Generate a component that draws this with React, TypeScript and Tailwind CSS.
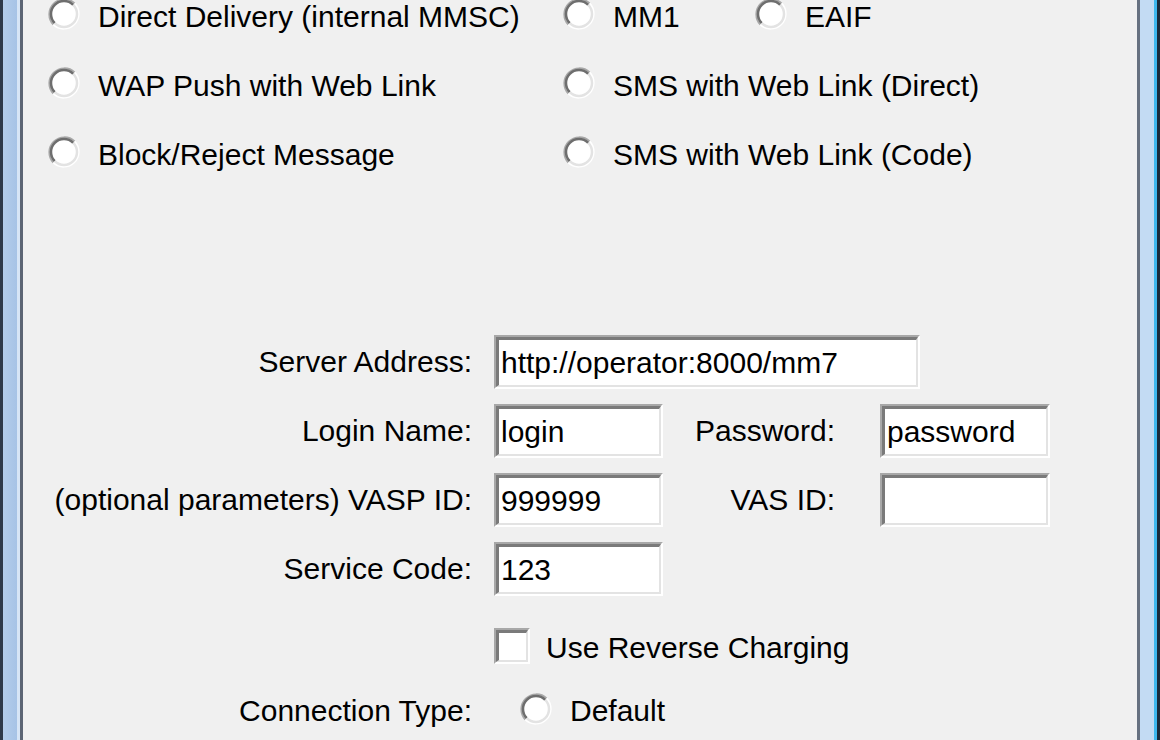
import React from 'react';

const Radio = () => (
  <svg width="32" height="32" viewBox="0 0 32 32" className="shrink-0">
    <circle cx="16" cy="16" r="13" fill="#ffffff" />
    <path d="M 5.4 26.6 A 15 15 0 0 1 26.6 5.4" fill="none" stroke="#a8a8a8" strokeWidth="2" />
    <path d="M 6.8 25.2 A 13 13 0 0 1 25.2 6.8" fill="none" stroke="#6e6e6e" strokeWidth="2.5" />
    <path d="M 26.6 5.4 A 15 15 0 0 1 5.4 26.6" fill="none" stroke="#ffffff" strokeWidth="2" />
    <path d="M 25.2 6.8 A 13 13 0 0 1 6.8 25.2" fill="none" stroke="#e3e3e3" strokeWidth="2.5" />
  </svg>
);

const RadioOption = ({ label, width }: { label: string; width: string }) => (
  <div className={`flex items-center gap-[18px] ${width}`}>
    <div className="mb-[6px]">
      <Radio />
    </div>
    <span className="whitespace-nowrap">{label}</span>
  </div>
);

const Field = ({ value, width }: { value: string; width: string }) => (
  <div className={`h-[54px] border-t-2 border-l-2 border-b-2 border-r-2 border-t-[#a8a8a8] border-l-[#a8a8a8] border-b-white border-r-white ${width}`}>
    <div className="h-full bg-white border-t-[3px] border-l-[3px] border-b-2 border-r-2 border-t-[#7a7a7a] border-l-[#7a7a7a] border-b-[#e3e3e3] border-r-[#e3e3e3] flex items-center pl-[2px] overflow-hidden">
      <span className="whitespace-nowrap">{value}</span>
    </div>
  </div>
);

const Label = ({ text, width }: { text: string; width: string }) => (
  <div className={`text-right whitespace-nowrap shrink-0 ${width}`}>{text}</div>
);

export default function App() {
  return (
    <div
      className="w-[1160px] h-[740px] flex overflow-hidden text-black text-[30px] leading-none"
      style={{ fontFamily: '"Liberation Sans", Arial, sans-serif' }}
    >
      {/* left frame */}
      <div className="w-[3px] bg-[#2e3a4a]" />
      <div className="w-[14px] bg-gradient-to-r from-[#b3cdeb] to-[#a6c3e6]" />
      <div className="w-[3px] bg-[#d6e5f6]" />
      <div className="w-[3px] bg-[#5c6574]" />

      {/* client area */}
      <div className="flex-1 bg-[#f0f0f0] flex flex-col">
        <div className="-mt-[18px] flex flex-col">
          <div className="h-[69px] flex items-center pl-[25px]">
            <RadioOption label="Direct Delivery (internal MMSC)" width="w-[515px]" />
            <RadioOption label="MM1" width="w-[192px]" />
            <RadioOption label="EAIF" width="w-[200px]" />
          </div>
          <div className="h-[69px] flex items-center pl-[25px]">
            <RadioOption label="WAP Push with Web Link" width="w-[515px]" />
            <RadioOption label="SMS with Web Link (Direct)" width="w-[420px]" />
          </div>
          <div className="h-[69px] flex items-center pl-[25px]">
            <RadioOption label="Block/Reject Message" width="w-[515px]" />
            <RadioOption label="SMS with Web Link (Code)" width="w-[420px]" />
          </div>
        </div>

        <div className="mt-[146px] flex flex-col gap-[15px]">
          <div className="flex items-center">
            <Label text="Server Address:" width="w-[449px]" />
            <div className="ml-[22px]">
              <Field value="http://operator:8000/mm7" width="w-[426px]" />
            </div>
          </div>
          <div className="flex items-center">
            <Label text="Login Name:" width="w-[449px]" />
            <div className="ml-[22px]">
              <Field value="login" width="w-[169px]" />
            </div>
            <Label text="Password:" width="w-[172px]" />
            <div className="ml-[45px]">
              <Field value="password" width="w-[170px]" />
            </div>
          </div>
          <div className="flex items-center">
            <Label text="(optional parameters) VASP ID:" width="w-[449px]" />
            <div className="ml-[22px]">
              <Field value="999999" width="w-[169px]" />
            </div>
            <Label text="VAS ID:" width="w-[172px]" />
            <div className="ml-[45px]">
              <Field value="" width="w-[170px]" />
            </div>
          </div>
          <div className="flex items-center">
            <Label text="Service Code:" width="w-[449px]" />
            <div className="ml-[22px]">
              <Field value="123" width="w-[169px]" />
            </div>
          </div>
        </div>

        <div className="mt-[32px] h-[36px] flex items-center pl-[471px] gap-[16px]">
          <div className="w-[36px] h-[36px] border-t-2 border-l-2 border-b-2 border-r-2 border-t-[#a8a8a8] border-l-[#a8a8a8] border-b-white border-r-white">
            <div className="w-full h-full bg-white border-t-[3px] border-l-[3px] border-b-2 border-r-2 border-t-[#7a7a7a] border-l-[#7a7a7a] border-b-[#e3e3e3] border-r-[#e3e3e3]" />
          </div>
          <span className="whitespace-nowrap mt-[4px]">Use Reverse Charging</span>
        </div>

        <div className="mt-[31px] h-[32px] flex items-center">
          <Label text="Connection Type:" width="w-[449px]" />
          <div className="ml-[48px] flex items-center gap-[18px]">
            <div className="mb-[4px]">
              <Radio />
            </div>
            <span>Default</span>
          </div>
        </div>
      </div>

      {/* right frame */}
      <div className="w-[3px] bg-[#667080]" />
      <div className="w-[14px] bg-[#c3dbf3]" />
      <div className="w-[3px] bg-[#3fb8ee]" />
      <div className="w-[3px] bg-[#1b2a3a]" />
    </div>
  );
}
